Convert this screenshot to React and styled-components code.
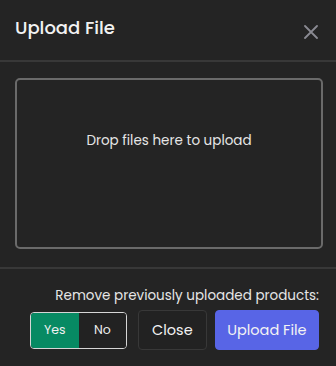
import React from "react";
import styled, {createGlobalStyle} from "styled-components";

const GlobalStyle = createGlobalStyle`
html, body {
    margin: 0;
    padding: 0;
    background: #242424;
}
* { box-sizing: border-box; }
body {
    font-family: "Poppins", "Inter", "Noto Sans", sans-serif;
    color: #ececec;
}
`

const App = () => {
    const [remove, setRemove] = React.useState(true);

    return (
        <React.Fragment>
            <GlobalStyle/>
            <Modal>
                <Header>
                    <h1>Upload File</h1>
                    <CloseIcon aria-label="close">
                        <svg width="14" height="14" viewBox="0 0 14 14">
                            <path d="M1 1L13 13M13 1L1 13" stroke="#8a8a92" strokeWidth="1.8" strokeLinecap="round"/>
                        </svg>
                    </CloseIcon>
                </Header>
                <Body>
                    <DropZone>Drop files here to upload</DropZone>
                </Body>
                <Footer>
                    <p>Remove previously uploaded products:</p>
                    <Actions>
                        <Toggle>
                            <ToggleButton active={remove} onClick={() => setRemove(true)}>Yes</ToggleButton>
                            <ToggleButton active={!remove} onClick={() => setRemove(false)}>No</ToggleButton>
                        </Toggle>
                        <Button>Close</Button>
                        <Button primary>Upload File</Button>
                    </Actions>
                </Footer>
            </Modal>
        </React.Fragment>
    )
}

const Modal = styled.article`
width: 336px;
height: 366px;
background: #242424;
display: flex;
flex-direction: column;
`

const Header = styled.section`
height: 62px;
padding: 0 17px 0 15px;
display: flex;
align-items: center;
justify-content: space-between;
border-bottom: 2px solid #383838;
h1 {
    margin: 0;
    font-size: 18px;
    font-weight: 500;
    color: #f2f2f2;
    padding-bottom: 6px;
}
`

const CloseIcon = styled.button`
border: none;
background: none;
padding: 0;
width: 16px;
height: 16px;
display: flex;
align-items: center;
justify-content: center;
margin-top: 4px;
`

const Body = styled.section`
padding: 16px 13px 18px 15px;
border-bottom: 2px solid #383838;
`

const DropZone = styled.div`
height: 171px;
border: 2px solid #6a6a6a;
border-radius: 5px;
display: flex;
align-items: center;
justify-content: center;
padding-bottom: 46px;
font-size: 13.5px;
color: #e6e6e6;
`

const Footer = styled.section`
flex: 1;
padding: 18px 17px 0 0;
display: flex;
flex-direction: column;
align-items: flex-end;
p {
    margin: 0 0 5px;
    font-size: 13.5px;
    line-height: 18px;
    color: #e6e6e6;
}
`

const Actions = styled.div`
display: flex;
align-items: center;
gap: 8px;
`

const Toggle = styled.div`
display: flex;
width: 97px;
height: 37px;
border: 1px solid #d6d6d6;
border-radius: 4px;
overflow: hidden;
margin-right: 3px;
`

const ToggleButton = styled.button`
flex: 1;
border: none;
background: ${props => props.active ? "#078a63" : "#222222"};
color: #f0f0f0;
font-family: inherit;
font-size: 12.5px;
padding: 0;
`

const Button = styled.button`
height: 40px;
padding: 0 ${props => props.primary ? "11.5px" : "13px"};
border-radius: 4px;
border: 1px solid ${props => props.primary ? "#5865e6" : "#383838"};
background: ${props => props.primary ? "#5865e6" : "#222222"};
color: #f3f3f3;
font-family: inherit;
font-size: 14.5px;
`

export default App;
